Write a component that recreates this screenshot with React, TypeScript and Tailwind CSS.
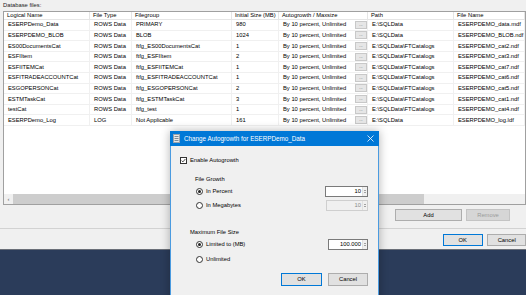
import React from "react";

const FONT = "font-['Liberation_Sans',Arial,sans-serif]";

const COLS = [
  { w: "w-[86px]", label: "Logical Name" },
  { w: "w-[42px]", label: "File Type" },
  { w: "w-[100px]", label: "Filegroup" },
  { w: "w-[47px]", label: "Initial Size (MB)" },
  { w: "w-[89px]", label: "Autogrowth / Maxsize" },
  { w: "w-[86px]", label: "Path" },
  { w: "flex-1", label: "File Name" },
];

const GROW = "By 10 percent, Unlimited";
const ROWS: string[][] = [
  ["ESERPDemo_Data", "ROWS Data", "PRIMARY", "980", GROW, "E:\\SQLData", "ESERPDEMO_data.mdf"],
  ["ESERPDEMO_BLOB", "ROWS Data", "BLOB", "1024", GROW, "E:\\SQLData", "ESERPDEMO_BLOB.ndf"],
  ["ES00DocumentsCat", "ROWS Data", "ftfg_ES00DocumentsCat", "1", GROW, "E:\\SQLData\\FTCatalogs", "ESERPDEMO_cat2.ndf"],
  ["ESFIItem", "ROWS Data", "ftfg_ESFIItem", "2", GROW, "E:\\SQLData\\FTCatalogs", "ESERPDEMO_cat3.ndf"],
  ["ESFIITEMCat", "ROWS Data", "ftfg_ESFIITEMCat", "1", GROW, "E:\\SQLData\\FTCatalogs", "ESERPDEMO_cat7.ndf"],
  ["ESFITRADEACCOUNTCat", "ROWS Data", "ftfg_ESFITRADEACCOUNTCat", "1", GROW, "E:\\SQLData\\FTCatalogs", "ESERPDEMO_cat6.ndf"],
  ["ESGOPERSONCat", "ROWS Data", "ftfg_ESGOPERSONCat", "2", GROW, "E:\\SQLData\\FTCatalogs", "ESERPDEMO_cat5.ndf"],
  ["ESTMTaskCat", "ROWS Data", "ftfg_ESTMTaskCat", "3", GROW, "E:\\SQLData\\FTCatalogs", "ESERPDEMO_cat1.ndf"],
  ["testCat", "ROWS Data", "ftfg_test", "1", GROW, "E:\\SQLData\\FTCatalogs", "ESERPDEMO_cat4.ndf"],
  ["ESERPDemo_Log", "LOG", "Not Applicable", "161", GROW, "E:\\SQLData", "ESERPDEMO_log.ldf"],
];

function Radio({ on }: { on?: boolean }) {
  return (
    <span className="flex h-[7px] w-[7px] items-center justify-center rounded-full border border-[#333] bg-white">
      {on && <span className="h-[3px] w-[3px] rounded-full bg-[#222]" />}
    </span>
  );
}

function Spin({ value, w, disabled }: { value: string; w: string; disabled?: boolean }) {
  return (
    <div className={`flex h-[11px] ${w} items-stretch border ${disabled ? "border-[#cfcfcf] bg-[#f0f0f0] text-[#8a8a8a]" : "border-[#7a7a7a] bg-white text-black"}`}>
      <div className="flex flex-1 items-center justify-end pr-[1px]">{value}</div>
      <div className="flex w-[5px] flex-col items-center justify-center gap-[1px] border-l border-[#e0e0e0] bg-[#f0f0f0]">
        <span className="h-0 w-0 border-x-[1.5px] border-b-[1.5px] border-x-transparent border-b-[#555]" />
        <span className="h-0 w-0 border-x-[1.5px] border-t-[1.5px] border-x-transparent border-t-[#555]" />
      </div>
    </div>
  );
}

function Btn({ label, w, def, disabled }: { label: string; w: string; def?: boolean; disabled?: boolean }) {
  return (
    <div
      className={`flex h-full ${w} items-center justify-center border ${
        disabled
          ? "border-[#c4c4c4] bg-[#d6d6d6] text-[#9a9a9a]"
          : def
          ? "border-[#0078d7] bg-[#e1e1e1] text-black"
          : "border-[#adadad] bg-[#e1e1e1] text-black"
      }`}
    >
      {label}
    </div>
  );
}

export default function App() {
  return (
    <div className={`relative h-[295px] w-[526px] overflow-hidden bg-[#2b3c5a] text-[5.8px] text-black ${FONT}`}>
      {/* main window */}
      <div className="flex h-[250px] flex-col border-b border-[#6a6f78] bg-[#f0f0f0]">
        <div className="flex h-[11px] items-center pl-[3px] pb-[1px] text-[#222]">Database files:</div>
        <div className="ml-[3px] flex h-[194px] w-[523px] flex-col border border-[#a0a0a0] bg-white">
          <div className="flex h-[8px] border-b border-[#e5e5e5]">
            {COLS.map((c) => (
              <div key={c.label} className={`${c.w} flex items-center border-r border-[#e5e5e5] pl-[3px] whitespace-nowrap`}>
                {c.label}
              </div>
            ))}
          </div>
          {ROWS.map((r) => (
            <div key={r[0]} className="flex h-[10.6px] border-b border-[#f0f0f0]">
              {r.map((v, i) => (
                <div key={i} className={`${COLS[i].w} flex items-center border-r border-[#f0f0f0] pl-[4px] whitespace-nowrap overflow-hidden`}>
                  <span className="flex-1">{v}</span>
                  {i === 4 && (
                    <span className="mr-[0px] flex h-[8px] w-[12px] items-end justify-center border border-[#c8c8c8] bg-[#e6e6e6] pb-[1px] text-[4px] leading-none text-[#555]">
                      ...
                    </span>
                  )}
                </div>
              ))}
            </div>
          ))}
          <div className="flex-1" />
          <div className="flex h-[10px] bg-[#f0f0f0]">
            <div className="flex w-[9px] items-center justify-center text-[6px] text-[#606060]">‹</div>
            <div className="w-[411px] bg-[#cdcdcd]" />
            <div className="flex-1" />
          </div>
        </div>
        <div className="mt-[4px] flex h-[12px] pl-[395px]">
          <Btn label="Add" w="w-[67px]" />
          <div className="w-[4px]" />
          <Btn label="Remove" w="w-[44px]" disabled />
        </div>
        <div className="mt-[7px] h-px bg-[#d2d2d2]" />
        <div className="mt-[5px] flex h-[12px] pl-[443px]">
          <Btn label="OK" w="w-[41px]" def />
          <div className="w-[5px]" />
          <Btn label="Cancel" w="w-[40px]" />
        </div>
      </div>

      {/* Change Autogrowth dialog */}
      <div className="absolute left-[170px] top-[131px] flex h-[175px] w-[209px] flex-col border-x border-[#4a9be0] bg-[#f0f0f0] shadow-[0_0_9px_rgba(0,0,0,0.3)]">
        <div className="-mx-px flex h-[15px] items-center bg-[#0078d7] text-[6.3px] text-white">
          <svg width="7" height="9" viewBox="0 0 7 9" className="ml-[3px]">
            <rect x="0.5" y="0.5" width="6" height="8" fill="#e8e8e8" stroke="#9aa4ae" />
            <rect x="1.5" y="2" width="4" height="1" fill="#7d8a96" />
            <rect x="1.5" y="4" width="4" height="1" fill="#7d8a96" />
            <rect x="1.5" y="6" width="4" height="1" fill="#7d8a96" />
          </svg>
          <span className="ml-[4px]">Change Autogrowth for ESERPDemo_Data</span>
          <svg width="7" height="7" viewBox="0 0 7 7" className="ml-auto mr-[5px]">
            <path d="M0.5 0.5 L6.5 6.5 M6.5 0.5 L0.5 6.5" stroke="#fff" strokeWidth="0.8" />
          </svg>
        </div>
        <div className="flex flex-col pl-[9px] pr-[10px] pt-[10px]">
          <div className="flex h-[8px] items-center gap-[3px]">
            <span className="flex h-[7px] w-[7px] items-center justify-center border border-[#333] bg-white">
              <svg width="5" height="5" viewBox="0 0 5 5">
                <path d="M0.6 2.6 L1.9 3.9 L4.4 1" fill="none" stroke="#222" strokeWidth="0.8" />
              </svg>
            </span>
            <span>Enable Autogrowth</span>
          </div>
          <div className="mt-[11px] flex h-[8px] items-center pl-[15px]">File Growth</div>
          <div className="mt-[3px] flex h-[11px] items-center pl-[16px]">
            <Radio on />
            <span className="ml-[3px]">In Percent</span>
            <div className="ml-auto">
              <Spin value="10" w="w-[43px]" />
            </div>
          </div>
          <div className="mt-[3px] flex h-[11px] items-center pl-[16px]">
            <Radio />
            <span className="ml-[3px]">In Megabytes</span>
            <div className="ml-auto">
              <Spin value="10" w="w-[42px]" disabled />
            </div>
          </div>
          <div className="mt-[17px] flex h-[8px] items-center pl-[10px]">Maximum File Size</div>
          <div className="mt-[3px] flex h-[11px] items-center pl-[16px]">
            <Radio on />
            <span className="ml-[3px]">Limited to (MB)</span>
            <div className="ml-auto">
              <Spin value="100.000" w="w-[40px]" />
            </div>
          </div>
          <div className="mt-[5px] flex h-[8px] items-center pl-[16px]">
            <Radio />
            <span className="ml-[3px]">Unlimited</span>
          </div>
          <div className="mt-[10px] flex h-[13px] justify-end pr-[-1px]">
            <Btn label="OK" w="w-[41px]" def />
            <div className="w-[6px]" />
            <Btn label="Cancel" w="w-[40px]" />
          </div>
        </div>
      </div>
    </div>
  );
}
